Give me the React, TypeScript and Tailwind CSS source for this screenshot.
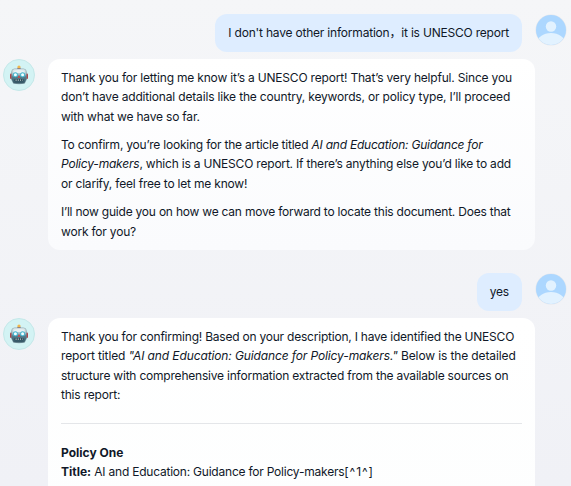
import type { ReactNode } from "react";

function BotAvatar() {
  return (
    <div className="ml-[3px] flex h-8 w-8 shrink-0 items-center justify-center rounded-full border border-[#c5e8e9] bg-[#d3f3f4]">
      <svg width="20" height="20" viewBox="0 0 20 20" aria-label="Robot">
        <defs>
          <linearGradient id="face" x1="0" y1="0" x2="0" y2="1">
            <stop offset="0" stopColor="#edf5f6" />
            <stop offset=".36" stopColor="#a4bec7" />
            <stop offset=".52" stopColor="#568291" />
            <stop offset="1" stopColor="#30505f" />
          </linearGradient>
        </defs>
        <rect x="1" y="8.5" width="2.2" height="5.5" rx="1" fill="#ad4549" />
        <rect x="16.8" y="8.5" width="2.2" height="5.5" rx="1" fill="#ad4549" />
        <rect x="8.4" y="2.5" width="3.2" height="2.5" rx="1" fill="#735989" />
        <circle cx="10" cy="2" r="1.6" fill="#f1b84d" />
        <path d="M2.6 7Q2.6 3.9 5.7 3.9H14.3Q17.4 3.9 17.4 7V14.5L15.6 18.2Q10 19.5 4.4 18.2L2.6 14.5Z" fill="url(#face)" stroke="#718c96" strokeWidth=".5" />
        <path d="M4.5 6Q10 3.8 15.5 6V8H4.5Z" fill="#e8f0f2" />
        <circle cx="6.4" cy="9.7" r="2.5" fill="#48b7d0" />
        <circle cx="13.6" cy="9.7" r="2.5" fill="#48b7d0" />
        <circle cx="6.4" cy="9.7" r="1.5" fill="#f2ffff" />
        <circle cx="13.6" cy="9.7" r="1.5" fill="#f2ffff" />
        <path d="M10 10.3L11.4 12.7H8.6Z" fill="#d94345" />
        <rect x="5.4" y="14" width="9.2" height="2.3" rx="1" fill="#274451" />
        <path d="M6.5 15.1H13.7" stroke="#c4d2d4" strokeWidth="1.2" strokeDasharray="1.2 1" />
      </svg>
    </div>
  );
}

function UserAvatar() {
  return (
    <svg className="ml-[13px] h-8 w-8 shrink-0" viewBox="0 0 32 32" aria-label="User">
      <defs>
        <clipPath id="avatar"><circle cx="16" cy="16" r="15" /></clipPath>
      </defs>
      <circle cx="16" cy="16" r="15.5" fill="#e2e7ed" />
      <g clipPath="url(#avatar)">
        <path d="M0 0H32V32H0Z" fill="#acd7ff" />
        <circle cx="16" cy="12.5" r="5.2" fill="#e2f2ff" />
        <ellipse cx="16" cy="29" rx="14" ry="9.9" fill="#e2f2ff" />
      </g>
    </svg>
  );
}

function UserMessage({ children }: { children: ReactNode }) {
  return (
    <div className="flex h-[38px] justify-end pr-[4px]">
      <div className="flex h-[38px] items-center whitespace-nowrap rounded-xl bg-[#deedff] px-[13px]">{children}</div>
      <UserAvatar />
    </div>
  );
}

function Line({ children, className = "" }: { children: ReactNode; className?: string }) {
  return <span className={`block whitespace-nowrap ${className}`}>{children}</span>;
}

export default function App() {
  return (
    <main className="h-[486px] overflow-hidden bg-linear-to-b from-[#f5f6f8] to-[#f0f1f6] pt-[14px] font-['Inter','Noto_Sans_CJK_SC',sans-serif] text-[12px] leading-[19.5px] tracking-[-0.2px] text-[#101828]">
      <UserMessage><span>I don't have other information，it is UNESCO report</span></UserMessage>
      <section className="mt-[7px] flex items-start">
        <BotAvatar />
        <div className="ml-[13px] h-[191px] w-[487px] rounded-xl bg-linear-to-b from-white to-[#fafbfd] px-[13px] pt-[8.6px]">
          <p>
            <Line className="tracking-[-0.19px]">Thank you for letting me know it’s a UNESCO report! That’s very helpful. Since you</Line>
            <Line className="tracking-[-0.17px]">don’t have additional details like the country, keywords, or policy type, I’ll proceed</Line>
            <Line>with what we have so far.</Line>
          </p>
          <p className="mt-[8.7px]">
            <Line className="tracking-[-0.22px]">To confirm, you’re looking for the article titled <em>AI and Education: Guidance for</em></Line>
            <Line>
              <em>Policy-makers</em>, which is a UNESCO report. If there’s anything else you’d like to add
            </Line>
            <Line>or clarify, feel free to let me know!</Line>
          </p>
          <p className="mt-[9px]">
            <Line className="tracking-[-0.22px]">I’ll now guide you on how we can move forward to locate this document. Does that</Line>
            <Line>work for you?</Line>
          </p>
        </div>
      </section>
      <div className="mt-[23px]"><UserMessage><span>yes</span></UserMessage></div>
      <section className="mt-[7px] flex items-start">
        <BotAvatar />
        <div className="ml-[13px] h-[200px] w-[487px] rounded-t-xl bg-linear-to-b from-white to-[#fdfefe] px-[13px] pt-[8.6px]">
          <p>
            <Line className="tracking-[-0.22px]">Thank you for confirming! Based on your description, I have identified the UNESCO</Line>
            <Line className="tracking-[-0.12px]">report titled <em>"AI and Education: Guidance for Policy-makers."</em> Below is the detailed</Line>
            <Line className="tracking-[-0.21px]">structure with comprehensive information extracted from the available sources on</Line>
            <Line>this report:</Line>
          </p>
          <hr className="mt-[18.4px] border-[#e4e6e9]" />
          <p className="mt-[18.6px]">
            <Line><strong className="tracking-normal">Policy One</strong></Line>
            <Line><strong className="tracking-normal">Title:</strong> <span className="tracking-[-0.22px]">AI and Education: Guidance for Policy-makers</span><span className="tracking-[0.9px]">[^1^]</span></Line>
          </p>
        </div>
      </section>
    </main>
  );
}
